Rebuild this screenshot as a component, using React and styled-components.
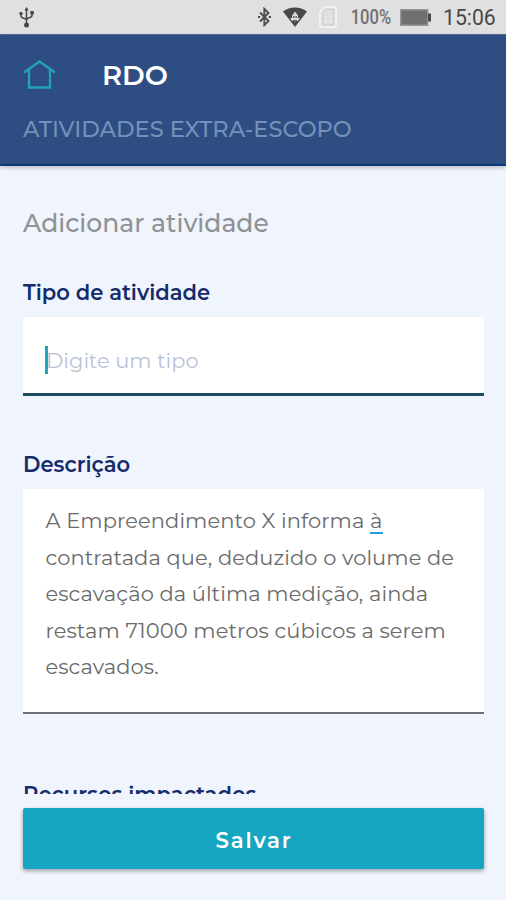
import React from "react";
import styled, { createGlobalStyle } from "styled-components";

const description = [
  { text: "A Empreendimento X informa ", marked: "à" },
  { text: "contratada que, deduzido o volume de" },
  { text: "escavação da última medição, ainda" },
  { text: "restam 71000 metros cúbicos a serem" },
  { text: "escavados." },
];

const UsbIcon = () => (
  <svg width="16" height="22" viewBox="0 0 16 22" fill="none" stroke="#484848" strokeWidth="1.5">
    <path d="M7.500 3v14M2 7v3c0 3 5.500 1.500 5.500 4.500M13 6v3.500c0 3-5.500 1.500-5.500 4.500" />
    <path d="M7.500 1 9.700 4.500H5.300z" fill="#484848" stroke="none" />
    <circle cx="2" cy="7.500" r="1.700" fill="#484848" stroke="none" />
    <path d="M11.300 5h3.500v3.500h-3.500z" fill="#484848" stroke="none" />
    <circle cx="7.500" cy="19" r="2.500" fill="#484848" stroke="none" />
  </svg>
);

const BluetoothIcon = () => (
  <svg width="13" height="20" viewBox="0 0 13 20" fill="none" stroke="#505050" strokeWidth="1.9">
    <path d="m2 5.500 8.500 8.500L6.300 18.200V1.800L10.500 6 2 14.500" />
    <path d="M0 10h2.200M10.800 10H13" strokeWidth="2" />
  </svg>
);

const WifiIcon = () => (
  <svg width="24" height="20" viewBox="0 0 24 20">
    <path d="M0 4.500C7-1 17-1 24 4.500L12 20z" fill="#484848" />
    <path d="m12 4.500-3 4v2.500H7l2 3h6l2-3h-2V8.500z" fill="#d8d8d8" />
    <path d="M10 9h1.500v2H10zM12.500 9H14v2h-1.500zM9.500 13h5L12 16z" fill="#666" />
  </svg>
);

const SimIcon = () => (
  <svg width="18" height="22" viewBox="0 0 18 22" fill="none">
    <path d="M5.500 1H16q1 0 1 1v18q0 1-1 1H2q-1 0-1-1V6z" stroke="#f5f5f5" strokeWidth="1.400" />
    <path d="M4 18.500v-12L6.500 3.500H14M14.500 4v15H4" stroke="#cdcdcd" />
    <path d="M7 10v2M11.500 10v2M7 15v2M11.500 15v2" stroke="#f2f2f2" strokeWidth="1.500" />
  </svg>
);

const BatteryIcon = () => (
  <svg width="31" height="17" viewBox="0 0 31 17">
    <path d="M.7.700h27v15.600H.7z" fill="#707070" stroke="#969696" strokeWidth="1.400" />
    <path d="M28 4.500h3v8h-3z" fill="#484848" />
  </svg>
);

const HomeIcon = () => (
  <svg width="32" height="30" viewBox="0 0 32 30" fill="none" stroke="#24a2b8" strokeWidth="2.3">
    <path d="M1 12.500 16.500 1.500 32 12.500M6 10v17.500h21V10" />
  </svg>
);

const App = () => {
  return (
    <>
      <GlobalStyle />
      <Screen>
        <StatusBar>
          <UsbIcon />
          <StatusGroup>
            <BluetoothIcon />
            <WifiIcon />
            <SimIcon />
            <Percent>100%</Percent>
            <BatteryIcon />
            <Clock>15:06</Clock>
          </StatusGroup>
        </StatusBar>
        <Header>
          <TitleRow>
            <HomeIcon />
            <h1>RDO</h1>
          </TitleRow>
          <Subtitle>ATIVIDADES EXTRA-ESCOPO</Subtitle>
        </Header>
        <Content>
          <SectionTitle>Adicionar atividade</SectionTitle>
          <Label>Tipo de atividade</Label>
          <InputBox>
            <Caret />
            <Placeholder>Digite um tipo</Placeholder>
          </InputBox>
          <Label>Descrição</Label>
          <TextBox>
            {description.map((line) => (
              <Line key={line.text}>
                {line.text}
                {line.marked && <Marked>{line.marked}</Marked>}
              </Line>
            ))}
          </TextBox>
          <Label>Recursos impactados</Label>
        </Content>
        <Footer>
          <SaveButton>Salvar</SaveButton>
        </Footer>
      </Screen>
    </>
  );
};

const GlobalStyle = createGlobalStyle`
  * {
    box-sizing: border-box;
    margin: 0;
    padding: 0;
  }

  body {
    font-family: "Montserrat", "Inter", sans-serif;
    background-color: #f0f4fc;
  }
`;

const Screen = styled.div`
  display: flex;
  flex-direction: column;
  width: 506px;
  height: 900px;
  overflow: hidden;
  background-color: #f0f4fc;
`;

const StatusBar = styled.div`
  display: flex;
  align-items: center;
  justify-content: space-between;
  flex: none;
  height: 34px;
  padding: 0 10px 0 19px;
  background-color: #e0e0e0;
`;

const StatusGroup = styled.div`
  display: flex;
  align-items: center;
  font-family: "Roboto", sans-serif;

  svg {
    flex: none;
    margin-right: 12px;
  }
`;

const Percent = styled.span`
  width: 51px;
  padding-left: 2px;
  font-size: 19.5px;
  font-weight: 500;
  color: #707070;
  white-space: nowrap;
  transform: scaleX(0.85);
  transform-origin: left;
`;

const Clock = styled.span`
  width: 53px;
  font-size: 21.2px;
  color: #484848;
`;

const Header = styled.header`
  position: relative;
  flex: none;
  height: 132px;
  padding: 22px 23px 0;
  background-color: #2e4d82;
  border-top: 1px solid #52698f;
  border-bottom: 2px solid #0b3878;
  box-shadow: 0 2px 4px rgba(0, 0, 0, 0.2);
`;

const TitleRow = styled.div`
  display: flex;
  align-items: center;
  height: 36px;

  h1 {
    margin-left: 47px;
    font-size: 27.5px;
    font-weight: 600;
    color: #fff;
  }
`;

const Subtitle = styled.p`
  margin-top: 21px;
  font-size: 22.5px;
  font-weight: 500;
  line-height: 30px;
  white-space: nowrap;
  color: #7391ba;
`;

const Content = styled.main`
  flex: none;
  height: 627.5px;
  padding: 0 22px 0 23px;
  overflow: hidden;
`;

const SectionTitle = styled.h2`
  margin: 41px 0 40px;
  font-size: 25px;
  font-weight: 500;
  line-height: 32px;
  color: #8f9294;
`;

const Label = styled.h3`
  height: 38px;
  font-size: 21.1px;
  font-weight: 600;
  line-height: 28px;
  white-space: nowrap;
  color: #142b6c;
`;

const InputBox = styled.div`
  position: relative;
  height: 79px;
  margin-bottom: 55px;
  padding: 29px 23px;
  background-color: #fff;
  border-bottom: 3px solid #1c4e60;
`;

const Caret = styled.span`
  position: absolute;
  top: 29px;
  left: 22px;
  width: 3px;
  height: 28px;
  background-color: #20a5bd;
`;

const Placeholder = styled.p`
  font-size: 21px;
  font-weight: 400;
  line-height: 30px;
  color: #b8c2d8;
`;

const TextBox = styled.div`
  height: 225px;
  margin-bottom: 67px;
  padding: 14px 22px 14px 22.5px;
  background-color: #fff;
  border-bottom: 2px solid #6b6f72;
`;

const Line = styled.p`
  font-size: 21px;
  font-weight: 400;
  line-height: 36.6px;
  letter-spacing: 0.08px;
  white-space: nowrap;
  color: #6a6a6a;
`;

const Marked = styled.span`
  display: inline-block;
  line-height: 22px;
  border-bottom: 2px solid #1f9fd8;
`;

const Footer = styled.footer`
  flex: none;
  height: 106.5px;
  padding: 14.5px 22px 0 23px;
`;

const SaveButton = styled.button`
  width: 100%;
  height: 61px;
  padding: 2px 0 0 1px;
  border: none;
  border-radius: 2px;
  background-color: #16a6c2;
  box-shadow: 0 2px 4px rgba(0, 0, 0, 0.35);
  font-family: inherit;
  font-size: 21.3px;
  font-weight: 600;
  letter-spacing: 1.8px;
  color: #fff;
`;

export default App;
